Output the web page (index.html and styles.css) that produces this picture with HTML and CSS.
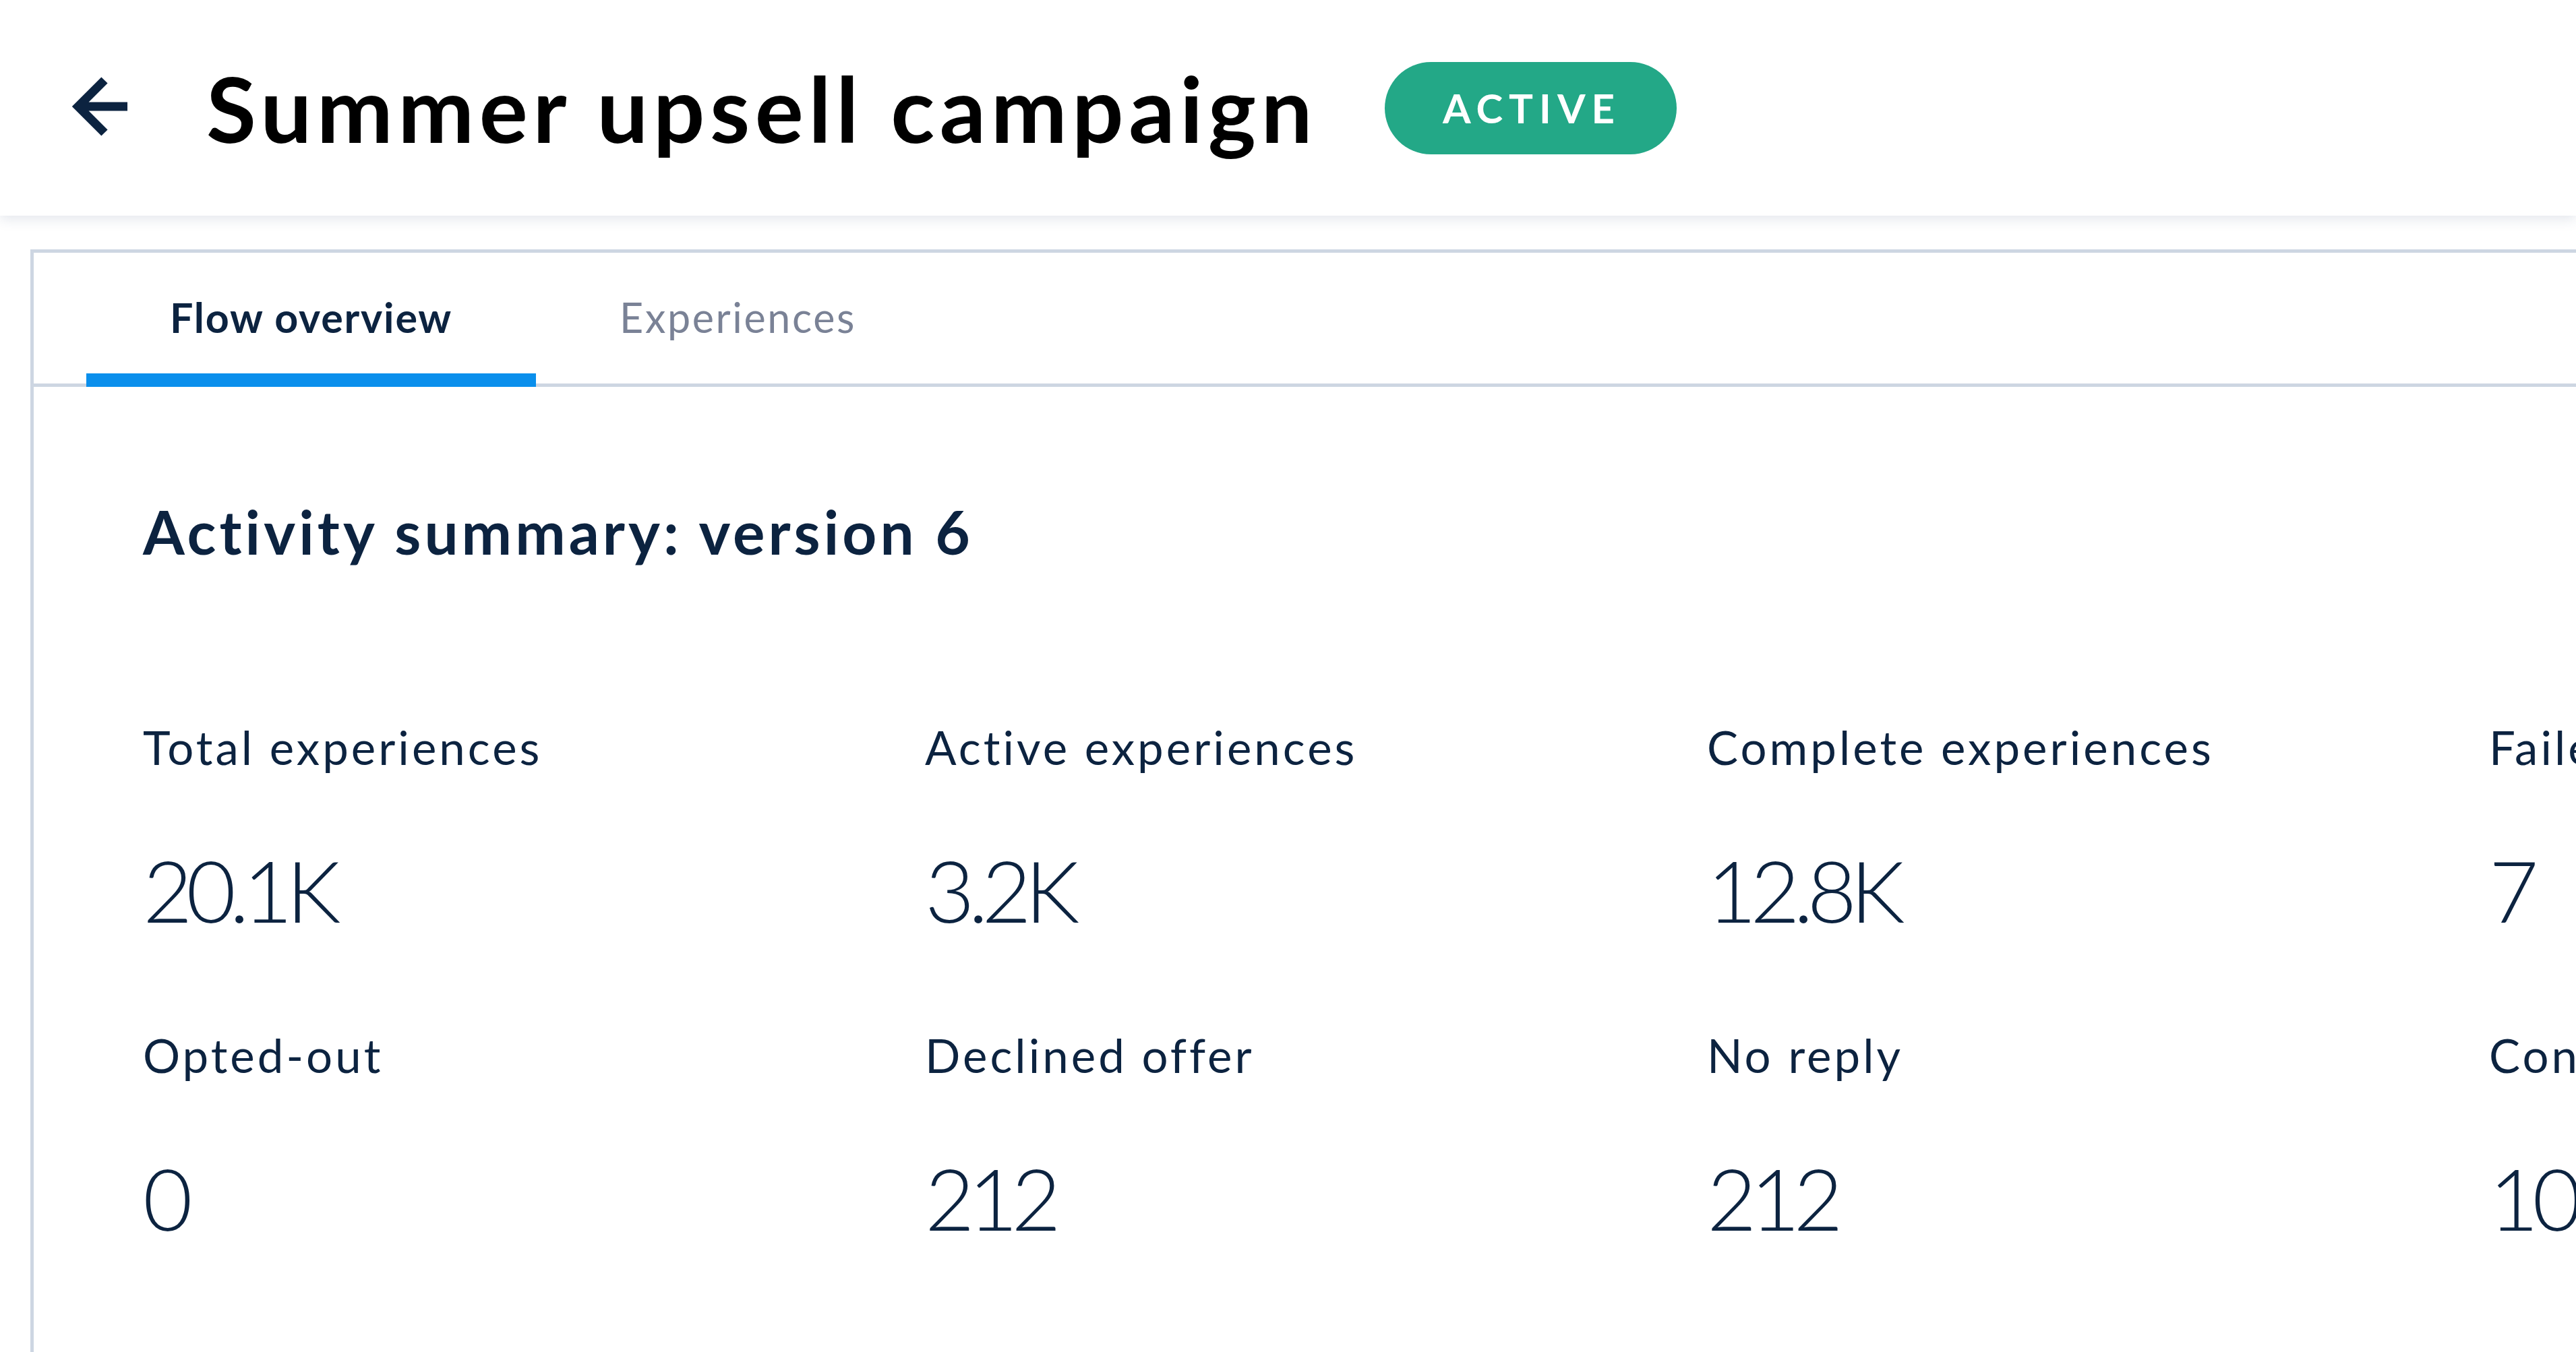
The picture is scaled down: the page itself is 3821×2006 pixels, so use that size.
FILE: index.html
```html
<!DOCTYPE html>
<html lang="en">
<head>
<meta charset="utf-8">
<title>Summer upsell campaign</title>
<link rel="stylesheet" href="styles.css">
</head>
<body>
<header class="topbar">
  <a class="back" href="#" aria-label="Back">
    <svg class="back-icon" viewBox="0 0 100 100" width="100" height="100" aria-hidden="true">
      <path d="M94 53 H22 M60 14 L21 53 L60 92" fill="none" stroke="#0c2340" stroke-width="13" stroke-linejoin="miter" stroke-linecap="butt"/>
    </svg>
  </a>
  <h1 class="title">Summer upsell campaign</h1>
  <span class="badge">ACTIVE</span>
</header>
<main class="page">
  <section class="card">
    <nav class="tabs">
      <a class="tab tab-active" href="#">Flow overview</a>
      <a class="tab" href="#">Experiences</a>
    </nav>
    <div class="content">
      <h2 class="section-title">Activity summary: version 6</h2>
      <div class="stats">
        <div class="stat"><div class="stat-label">Total experiences</div><div class="stat-value">20.1K</div></div>
        <div class="stat"><div class="stat-label">Active experiences</div><div class="stat-value">3.2K</div></div>
        <div class="stat"><div class="stat-label">Complete experiences</div><div class="stat-value">12.8K</div></div>
        <div class="stat"><div class="stat-label">Failed experiences</div><div class="stat-value">7</div></div>
        <div class="stat"><div class="stat-label">Opted-out</div><div class="stat-value">0</div></div>
        <div class="stat"><div class="stat-label">Declined offer</div><div class="stat-value">212</div></div>
        <div class="stat"><div class="stat-label">No reply</div><div class="stat-value">212</div></div>
        <div class="stat"><div class="stat-label">Converted</div><div class="stat-value">10,421</div></div>
      </div>
    </div>
  </section>
</main>
</body>
</html>
```
FILE: styles.css
```css
html, body {
  margin: 0;
  padding: 0;
}
body {
  width: 3821px;
  height: 2006px;
  overflow: hidden;
  background: #ffffff;
  font-family: "Lato", "Noto Sans", sans-serif;
  color: #0c2340;
  line-height: 1.2;
}
.topbar {
  position: relative;
  z-index: 2;
  height: 320px;
  display: flex;
  align-items: center;
  background: #ffffff;
  box-shadow: 0 5px 18px rgba(40, 60, 110, 0.13);
}
.back {
  display: flex;
  margin-left: 95px;
  margin-top: -10px;
}
.back-icon {
  display: block;
}
.title {
  margin: 0 0 0 111px;
  font-size: 135px;
  font-weight: 700;
  color: #000000;
  letter-spacing: 7.4px;
  white-space: nowrap;
}
.badge {
  margin-left: 100px;
  height: 137px;
  padding: 0 83px 0 86px;
  display: inline-flex;
  align-items: center;
  border-radius: 69px;
  background: #23a887;
  color: #ffffff;
  font-size: 60px;
  font-weight: 700;
  letter-spacing: 9px;
}
.page {
  padding: 50px 0 0 45px;
}
.card {
  border: 5px solid #cdd6e2;
  border-right: none;
  border-bottom: none;
  height: 1700px;
}
.tabs {
  display: flex;
  padding-left: 78px;
  border-bottom: 5px solid #cdd6e2;
  height: 194px;
}
.tab {
  position: relative;
  display: block;
  padding: 59px 124px 0;
  font-size: 61px;
  font-weight: 400;
  letter-spacing: 2.6px;
  color: #7a8296;
  text-decoration: none;
  white-space: nowrap;
}
.tab-active {
  color: #0c2340;
  font-weight: 700;
  letter-spacing: 1.8px;
}
.tab-active::after {
  content: "";
  position: absolute;
  left: 0;
  right: 0;
  bottom: -5px;
  height: 20px;
  background: #0a8fec;
}
.content {
  padding: 162px 0 0 162px;
}
.section-title {
  margin: 0;
  font-size: 89px;
  font-weight: 700;
  letter-spacing: 5px;
}
.stats {
  margin-top: 225px;
  display: grid;
  grid-template-columns: repeat(4, 1160px);
  row-gap: 129px;
}
.stat-label {
  font-size: 69px;
  font-weight: 400;
  letter-spacing: 4px;
  white-space: nowrap;
}
.stat-value {
  margin-top: 93px;
  font-size: 127px;
  font-weight: 300;
  letter-spacing: -9.5px;
  white-space: nowrap;
}
```
